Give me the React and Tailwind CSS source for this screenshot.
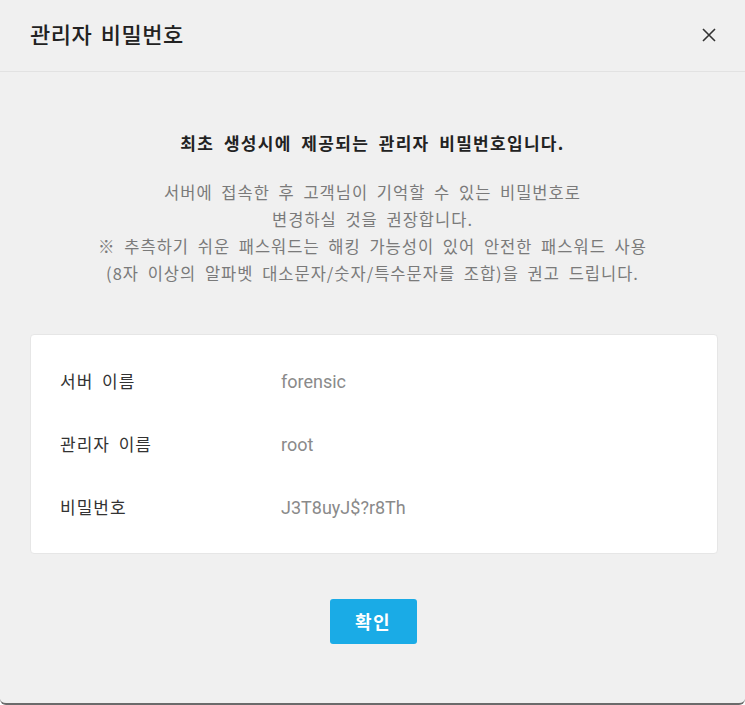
export default function App() {
  const font = { fontFamily: '"Noto Sans CJK KR", "Noto Sans", sans-serif' };
  const rows = [
    ["서버 이름", "forensic"],
    ["관리자 이름", "root"],
    ["비밀번호", "J3T8uyJ$?r8Th"],
  ];
  return (
    <div className="w-[745px] h-[705px] bg-white" style={font}>
      <div className="w-[745px] h-[705px] bg-[#f0f0f0] rounded-b-[6px] border-b-2 border-[#6b6b6b] flex flex-col">
        <div className="h-[72px] border-b border-[#e2e2e2] flex items-center justify-between pl-[30px] pr-[29px]">
          <div className="text-[22px] font-medium text-[#222] leading-none -mt-[6px] tracking-[0.5px] [word-spacing:3px]">관리자 비밀번호</div>
          <svg width="14" height="14" viewBox="0 0 14 14" className="-mt-[1px]">
            <path d="M1 1 L13 13 M13 1 L1 13" stroke="#333" strokeWidth="1.6" />
          </svg>
        </div>
        <div className="flex flex-col items-center pt-[58px]">
          <div className="text-[17px] font-bold text-[#222] leading-[26px] tracking-[1.3px] [word-spacing:4.5px]">최초 생성시에 제공되는 관리자 비밀번호입니다.</div>
          <div className="mt-[23px] text-[16.5px] text-[#7a7a7a] leading-[27px] text-center tracking-[1px] [word-spacing:4px]">
            <div>서버에 접속한 후 고객님이 기억할 수 있는 비밀번호로</div>
            <div>변경하실 것을 권장합니다.</div>
            <div>※ 추측하기 쉬운 패스워드는 해킹 가능성이 있어 안전한 패스워드 사용</div>
            <div>(8자 이상의 알파벳 대소문자/숫자/특수문자를 조합)을 권고 드립니다.</div>
          </div>
        </div>
        <div className="ml-[30px] mr-[27px] mt-[47px] h-[220px] bg-white rounded-[4px] border border-[#e6e6e6] flex flex-col justify-center gap-[39px] pl-[29px]">
          {rows.map(([k, v]) => (
            <div key={k} className="flex items-center h-[24px]">
              <div className="w-[221px] text-[17px] text-[#333] tracking-[1px] [word-spacing:4px]">{k}</div>
              <div className="text-[18px] text-[#8a8a8a]" style={{ fontFamily: 'Roboto, "Noto Sans CJK KR", sans-serif' }}>{v}</div>
            </div>
          ))}
        </div>
        <div className="flex justify-center mt-[45px] pl-[1px]">
          <button className="w-[87px] h-[45px] bg-[#1aabe6] rounded-[3px] text-white font-bold text-[18px] tracking-[1.5px]">확인</button>
        </div>
      </div>
    </div>
  );
}
